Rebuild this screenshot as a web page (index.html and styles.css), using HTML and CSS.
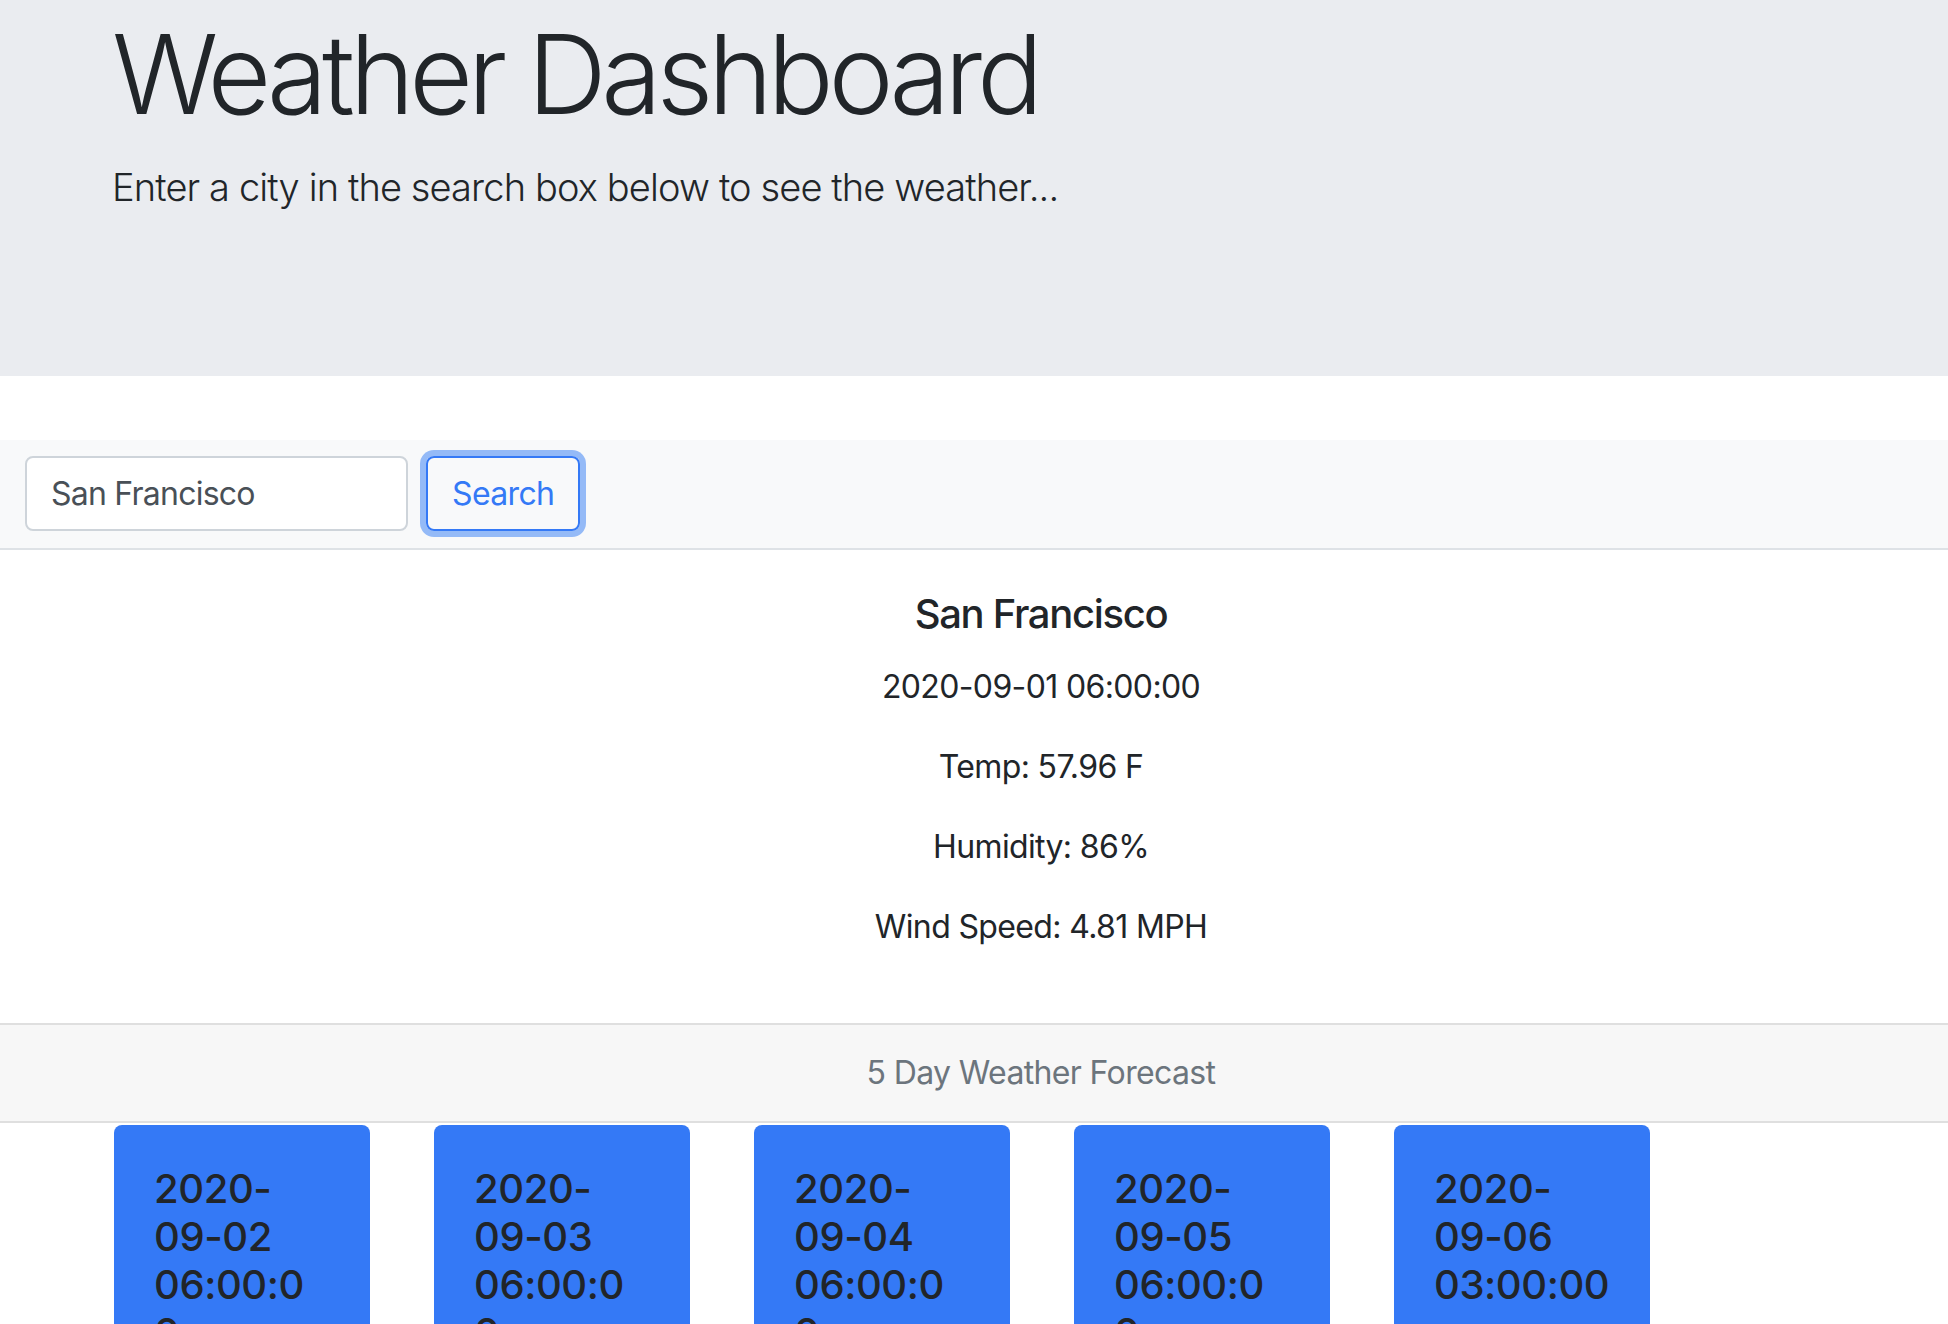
FILE: index.html
```html
<!DOCTYPE html>
<html lang="en">
<head>
<meta charset="utf-8">
<title>Weather Dashboard</title>
<link rel="stylesheet" href="styles.css">
</head>
<body>
<header class="jumbotron">
  <h1 class="display">Weather Dashboard</h1>
  <p class="lead">Enter a city in the search box below to see the weather...</p>
</header>
<nav class="searchbar">
  <form class="search-form">
    <input class="search-input" type="search" value="San Francisco" aria-label="Search">
    <button class="search-btn" type="button">Search</button>
  </form>
</nav>
<section class="current">
  <h5 class="city">San Francisco</h5>
  <p class="stat">2020-09-01 06:00:00</p>
  <p class="stat">Temp: 57.96 F</p>
  <p class="stat">Humidity: 86%</p>
  <p class="stat">Wind Speed: 4.81 MPH</p>
</section>
<section class="forecast">
  <div class="forecast-header">5 Day Weather Forecast</div>
  <div class="cards">
    <div class="card"><h5 class="card-title">2020-<br>09-02<br>06:00:0<br>0</h5></div>
    <div class="card"><h5 class="card-title">2020-<br>09-03<br>06:00:0<br>0</h5></div>
    <div class="card"><h5 class="card-title">2020-<br>09-04<br>06:00:0<br>0</h5></div>
    <div class="card"><h5 class="card-title">2020-<br>09-05<br>06:00:0<br>0</h5></div>
    <div class="card"><h5 class="card-title">2020-<br>09-06<br>03:00:00</h5></div>
  </div>
</section>
</body>
</html>
```
FILE: styles.css
```css
* { box-sizing: border-box; }
html, body { margin: 0; padding: 0; }
body {
  font-family: "Inter", "Liberation Sans", sans-serif;
  font-size: 32px;
  line-height: 1.5;
  letter-spacing: -0.02em;
  color: #212529;
  background: #fff;
  overflow: hidden;
}
.jumbotron {
  background: #eaecf0;
  height: 376px;
  padding: 8px 112px 0;
  margin-bottom: 64px;
}
.display {
  font-size: 110px;
  font-weight: 300;
  line-height: 1.2;
  margin: 0 0 19px;
  letter-spacing: -0.048em;
}
.lead {
  font-size: 38px;
  font-weight: 300;
  line-height: 1.5;
  margin: 0;
  letter-spacing: -0.023em;
}
.searchbar {
  background: #f8f9fa;
  padding: 16px 25px 17px;
  border-bottom: 2px solid #dee2e6;
}
.search-form {
  display: flex;
  align-items: center;
  gap: 18px;
}
.search-input {
  width: 383px;
  height: 75px;
  padding: 0 24px;
  font-family: inherit;
  font-size: 32px;
  letter-spacing: -0.024em;
  color: #495057;
  background: #fff;
  border: 2px solid #ced4da;
  border-radius: 8px;
  outline: none;
}
.search-btn {
  height: 75px;
  padding: 0 24px;
  font-family: inherit;
  font-size: 32px;
  letter-spacing: -0.02em;
  color: #3479f6;
  background: transparent;
  border: 2px solid #3479f6;
  border-radius: 8px;
  box-shadow: 0 0 0 6px #94baf7;
}
.current {
  padding: 40px 0 40px 134px;
  text-align: center;
}
.city {
  font-size: 40px;
  font-weight: 500;
  line-height: 1.2;
  letter-spacing: -0.033em;
  margin: 0 0 25px;
}
.stat {
  margin: 0 0 32px;
}
.forecast-header {
  background: #f7f7f7;
  border-top: 2px solid #dfdfdf;
  border-bottom: 2px solid #dfdfdf;
  padding: 24px 0 24px 134px;
  text-align: center;
  color: #6c757d;
}
.cards {
  display: flex;
  gap: 64px;
  padding: 2px 0 0 114px;
}
.card {
  width: 256px;
  flex: none;
  background: #3479f6;
  border-radius: 8px;
  padding: 40px;
  min-height: 420px;
}
.card-title {
  font-size: 40px;
  font-weight: 500;
  line-height: 1.2;
  letter-spacing: -0.01em;
  margin: 0;
  white-space: nowrap;
  color: #212529;
}
```
